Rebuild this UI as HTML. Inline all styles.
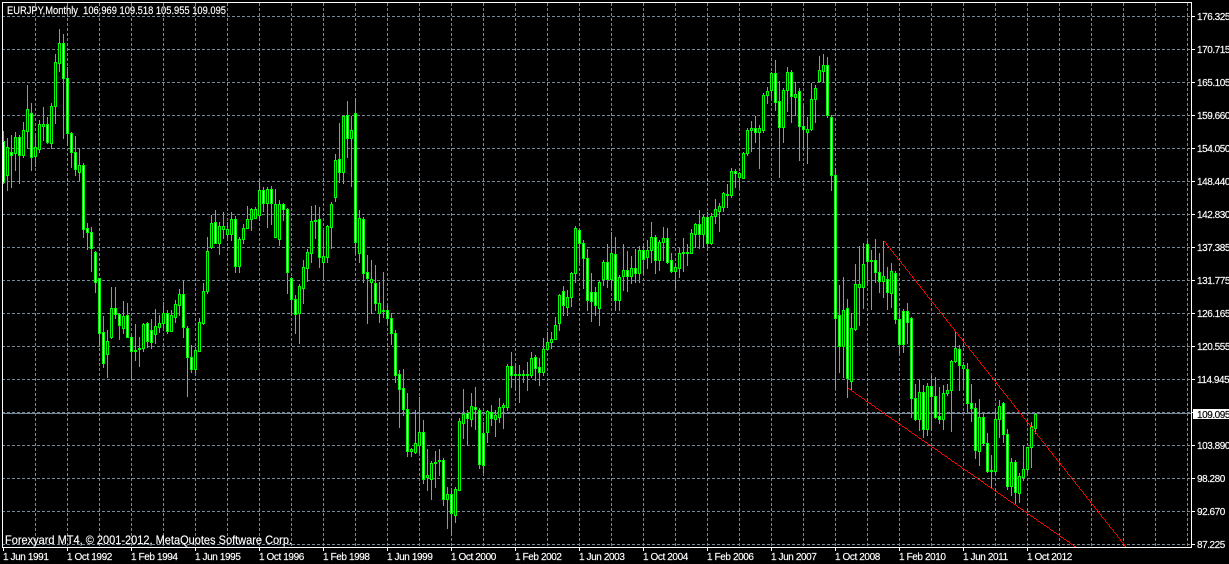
<!DOCTYPE html>
<html><head><meta charset="utf-8"><title>EURJPY,Monthly</title>
<style>
html,body{margin:0;padding:0;background:#000;width:1229px;height:564px;overflow:hidden}
svg{display:block;position:absolute;left:0;top:0}
text{font-family:"Liberation Sans",sans-serif;fill:#fff;white-space:pre;stroke:#fff;stroke-width:.15}
.t{font-size:10px;letter-spacing:-.4px}
.p{font-size:10px;letter-spacing:-.45px}
</style></head>
<body>
<svg id="s" width="1229" height="564" viewBox="0 0 1229 564" shape-rendering="crispEdges">
<rect width="1229" height="564" fill="#000"/>
<path id="gh" fill="none" stroke="#778899" stroke-width="1" stroke-dasharray="3 2"/>
<path id="gv" fill="none" stroke="#778899" stroke-width="1" stroke-dasharray="3 2"/>
<rect x="3" y="413" width="1188" height="1" fill="#778899"/>
<path id="wick" fill="#00ff00"/>
<path id="body" fill="#00ff00"/>
<path id="cw" fill="#ffffff"/>
<path id="cb" fill="#000000"/>
<path id="red" fill="#ff0000"/>
<path id="ax" fill="#ffffff"/>
<text x="7" y="14" font-size="11" textLength="219" lengthAdjust="spacingAndGlyphs">EURJPY,Monthly  106.969 109.518 105.955 109.095</text>
<text x="5" y="544" font-size="12" textLength="287" lengthAdjust="spacingAndGlyphs">Forexyard MT4, © 2001-2012, MetaQuotes Software Corp.</text>
<g class="t">
<text x="3" y="560" class="t">1 Jun 1991</text>
<text x="67" y="560" class="t">1 Oct 1992</text>
<text x="131" y="560" class="t">1 Feb 1994</text>
<text x="195" y="560" class="t">1 Jun 1995</text>
<text x="259" y="560" class="t">1 Oct 1996</text>
<text x="323" y="560" class="t">1 Feb 1998</text>
<text x="387" y="560" class="t">1 Jun 1999</text>
<text x="451" y="560" class="t">1 Oct 2000</text>
<text x="515" y="560" class="t">1 Feb 2002</text>
<text x="579" y="560" class="t">1 Jun 2003</text>
<text x="643" y="560" class="t">1 Oct 2004</text>
<text x="707" y="560" class="t">1 Feb 2006</text>
<text x="771" y="560" class="t">1 Jun 2007</text>
<text x="835" y="560" class="t">1 Oct 2008</text>
<text x="899" y="560" class="t">1 Feb 2010</text>
<text x="963" y="560" class="t">1 Jun 2011</text>
<text x="1027" y="560" class="t">1 Oct 2012</text>
</g>
<text x="1197" y="20" class="p">176.325</text>
<text x="1197" y="53" class="p">170.715</text>
<text x="1197" y="86" class="p">165.105</text>
<text x="1197" y="119" class="p">159.660</text>
<text x="1197" y="152" class="p">154.050</text>
<text x="1197" y="185" class="p">148.440</text>
<text x="1197" y="218" class="p">142.830</text>
<text x="1197" y="251" class="p">137.385</text>
<text x="1197" y="284" class="p">131.775</text>
<text x="1197" y="317" class="p">126.165</text>
<text x="1197" y="350" class="p">120.555</text>
<text x="1197" y="383" class="p">114.945</text>
<rect x="1193" y="409" width="36" height="10" fill="#fff"/>
<text x="1197" y="418" class="p" style="fill:#000;stroke:#000">109.095</text>
<text x="1197" y="449" class="p">103.890</text>
<text x="1197" y="482" class="p">98.280</text>
<text x="1197" y="515" class="p">92.670</text>
<text x="1197" y="548" class="p">87.225</text>
</svg>
<script>
var D=[131,141,182,183,1,138,147,175,190,0,135,152,155,187,1,132,137,153,170,0,135,137,155,183,1,122,130,155,157,0,85,109,131,147,0,103,113,157,170,1,133,147,156,166,0,120,124,149,152,0,107,124,126,140,0,117,124,142,143,1,103,106,143,148,0,54,62,106,123,0,29,43,63,71,0,34,43,78,138,1,67,78,133,145,1,132,133,152,167,1,136,152,169,175,1,148,165,172,180,0,
163,165,229,237,1,223,228,232,249,1,227,232,248,271,1,251,252,282,292,1,278,278,333,346,1,316,332,363,367,1,330,341,354,377,0,287,308,337,338,0,287,308,314,318,1,313,314,325,339,1,301,316,328,333,0,303,315,337,337,1,335,337,351,379,1,324,350,351,360,0,337,348,349,366,0,323,324,348,351,0,322,323,341,347,1,319,330,342,348,1,309,326,334,343,0,315,323,327,332,0,
302,313,323,327,0,310,313,331,333,1,310,315,331,331,0,300,304,317,322,0,289,294,305,315,0,280,294,327,337,1,326,328,357,396,1,345,357,369,372,1,347,350,369,372,0,318,322,351,351,0,283,291,323,324,0,237,251,291,293,0,215,223,247,248,0,210,222,243,243,1,222,226,243,254,0,212,226,229,238,0,222,229,234,237,0,212,219,234,240,0,216,219,266,272,1,237,239,266,272,0,
224,228,239,243,0,206,219,228,228,0,208,209,219,230,0,207,209,218,218,0,182,190,215,220,0,187,190,203,211,1,187,189,203,227,0,186,189,203,224,1,189,204,237,237,0,200,204,239,245,0,203,204,209,220,1,208,209,272,293,1,277,278,299,312,1,295,299,314,333,1,284,286,313,343,0,260,267,288,303,0,249,252,268,281,0,206,221,253,262,0,205,220,221,238,0,207,219,257,267,1,
230,256,262,280,0,225,226,257,262,0,202,204,227,248,0,154,160,197,201,0,123,159,172,182,1,115,116,172,183,0,101,115,138,157,1,116,130,138,186,0,98,113,242,253,1,210,218,253,262,0,217,219,273,282,1,255,272,278,323,1,260,279,282,313,0,265,283,303,310,1,282,303,313,322,0,272,310,311,317,0,306,310,318,323,1,313,318,333,344,1,330,333,375,382,1,370,374,389,427,1,
369,388,409,415,1,393,409,451,456,1,448,449,451,456,0,410,443,452,453,0,397,432,445,453,0,420,432,479,483,1,449,475,477,490,0,461,463,479,499,0,451,462,463,487,0,449,460,461,475,0,458,460,499,505,1,487,494,499,528,0,490,494,513,535,1,487,489,515,522,0,418,421,490,490,0,389,414,423,438,0,410,413,418,445,1,393,406,419,426,0,387,407,409,429,1,408,410,464,468,1,
422,433,465,472,1,410,411,432,442,0,405,412,418,425,1,410,415,419,436,0,398,407,417,422,0,403,405,407,428,0,364,366,407,410,0,352,366,375,387,1,363,374,375,390,0,365,374,375,402,0,370,374,375,382,0,362,374,375,390,0,352,358,375,377,0,355,357,368,380,1,358,367,372,385,1,338,349,372,375,0,332,342,349,349,0,332,339,342,348,0,317,325,339,339,0,294,295,323,330,0,
286,291,305,315,1,290,297,307,315,0,272,273,297,306,0,226,228,273,282,0,229,230,243,262,1,240,243,258,288,1,249,258,300,310,1,273,292,301,321,1,287,292,305,315,1,280,282,308,325,0,260,262,279,285,0,244,262,279,287,1,232,253,279,287,0,237,254,300,310,1,275,277,300,310,0,244,270,276,290,0,251,270,276,291,1,256,268,276,283,0,249,268,273,282,1,246,250,273,282,0,
243,250,259,273,1,240,250,257,268,0,222,237,250,262,0,235,237,260,273,1,240,242,260,270,0,227,238,242,260,0,228,238,262,263,1,253,260,271,272,1,263,267,271,287,0,248,253,268,277,0,238,252,253,271,0,244,252,253,265,0,229,233,253,253,0,223,224,234,247,0,210,224,234,248,1,215,217,234,247,0,212,217,243,250,1,213,216,243,244,0,199,209,216,223,0,203,206,211,231,0,
192,193,207,211,0,184,194,195,207,0,168,171,195,197,0,169,171,173,187,1,172,173,177,187,0,152,153,178,178,0,128,130,153,155,0,121,128,130,151,0,116,128,132,142,1,125,128,132,168,0,93,95,130,132,0,87,91,95,103,0,72,73,90,97,0,60,73,102,110,1,81,101,127,177,1,88,90,127,142,0,67,72,90,111,0,70,72,96,122,1,82,94,97,115,0,88,91,126,160,1,
105,126,129,148,1,117,129,132,163,0,83,99,129,130,0,85,88,99,122,0,56,70,81,82,0,54,65,71,82,0,57,65,115,117,1,115,117,175,190,1,168,175,318,388,1,285,315,346,372,1,277,310,346,377,0,299,308,378,397,1,313,328,381,390,0,264,284,329,330,0,246,284,287,325,0,243,264,287,308,0,241,244,261,282,1,250,260,261,309,0,239,260,272,282,1,253,272,281,292,1,
241,276,281,297,0,267,279,292,309,1,263,271,293,307,0,271,273,319,323,1,310,319,344,353,1,309,311,344,352,1,303,311,322,343,1,317,318,398,417,1,384,398,419,420,1,380,392,419,430,0,385,392,429,437,1,383,386,429,435,0,375,386,396,430,1,377,396,417,418,1,387,416,419,423,1,385,393,419,429,0,384,390,393,395,0,360,361,390,431,0,332,348,361,362,0,345,349,365,390,1,
362,365,368,388,0,363,369,403,412,1,384,403,408,421,1,403,408,450,458,1,399,417,451,465,0,413,417,443,445,1,433,443,471,472,1,455,470,471,487,0,410,419,471,473,0,400,406,419,437,0,402,403,434,442,1,429,434,486,489,1,458,462,486,495,0,460,462,492,504,1,473,476,493,502,0,445,469,477,480,0,447,447,469,472,0,422,426,447,467,0,413,414,428,433,0];
var w='',b='',cw='',cb='',n=D.length/5;
for(var i=0;i<n;i++){var c=3+4*i,k=i*5,h=D[k],t=D[k+1],m=D[k+2],l=D[k+3],f=D[k+4];
w+='M'+c+' '+h+'h1V'+(l+1)+'h-1z';
var x0=Math.max(c-1,3);
b+='M'+x0+' '+t+'H'+(c+2)+'V'+(m+1)+'H'+x0+'z';
if(m-t>=2){var s='M'+c+' '+(t+1)+'h1V'+m+'h-1z';if(f)cw+=s;else cb+=s;}}
document.getElementById('wick').setAttribute('d',w);
document.getElementById('body').setAttribute('d',b);
document.getElementById('cw').setAttribute('d',cw);
document.getElementById('cb').setAttribute('d',cb);
var red='';
for(var y=241;y<547;y++){var x=Math.round(884+(y-241)*242/306);red+='M'+x+' '+y+'h1v1h-1z';}
for(var x=848;x<1076;x++){var y=Math.round(388+(x-848)*159/228);red+='M'+x+' '+y+'h1v1h-1z';}
document.getElementById('red').setAttribute('d',red);
var gh='',gv='',ax='M2 2H1192V548H2zM3 3V547H1191V3z';
for(var r=16;r<=544;r+=33){gh+='M2 '+(r+.5)+'H1191';ax+='M1192 '+r+'h3v1h-3z';}
for(var x=35;x<=1187;x+=32)gv+='M'+(x+.5)+' 3V547';
for(var x=3;x<=1027;x+=64)ax+='M'+x+' 548h1v3h-1z';
document.getElementById('gh').setAttribute('d',gh);
document.getElementById('gv').setAttribute('d',gv);
var a=document.getElementById('ax');a.setAttribute('d',ax);a.setAttribute('fill-rule','evenodd');
</script>
</body></html>
